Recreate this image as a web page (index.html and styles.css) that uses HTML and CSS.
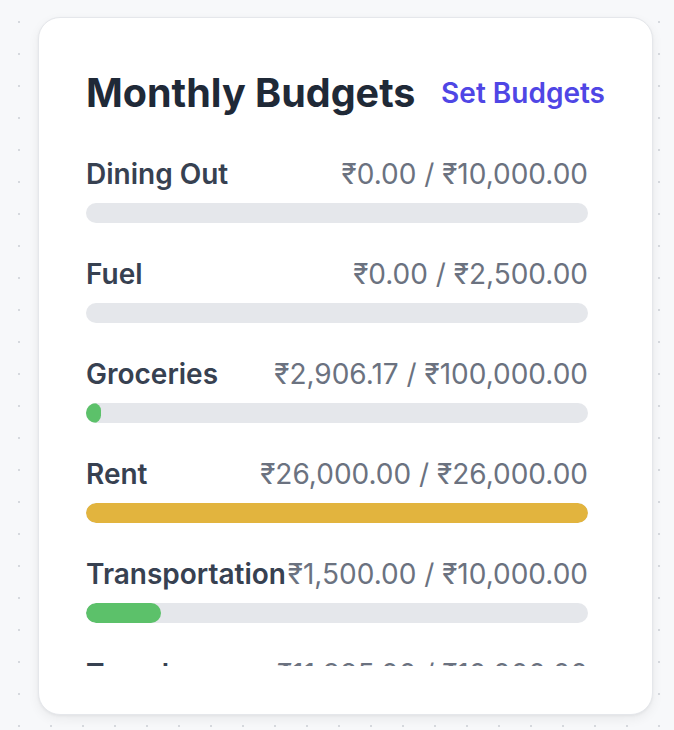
FILE: index.html
```html
<!DOCTYPE html>
<html lang="en">
<head>
    <meta charset="UTF-8">
    <meta name="viewport" content="width=device-width, initial-scale=1.0">
    <title>Monthly Budgets</title>
    <link rel="stylesheet" href="styles.css">
</head>
<body>
    <!-- Carte des budgets -->
    <div class="card">
        <div class="card-header">
            <h2>Monthly Budgets</h2>
            <a href="#" class="set-link">Set Budgets</a>
        </div>

        <div class="budget-list">
            <div class="budget">
                <div class="budget-info">
                    <span class="budget-name">Dining Out</span>
                    <span class="budget-amount">₹0.00 / ₹10,000.00</span>
                </div>
                <div class="bar"><div class="fill" style="width: 0%;"></div></div>
            </div>

            <div class="budget">
                <div class="budget-info">
                    <span class="budget-name">Fuel</span>
                    <span class="budget-amount">₹0.00 / ₹2,500.00</span>
                </div>
                <div class="bar"><div class="fill" style="width: 0%;"></div></div>
            </div>

            <div class="budget">
                <div class="budget-info">
                    <span class="budget-name">Groceries</span>
                    <span class="budget-amount">₹2,906.17 / ₹100,000.00</span>
                </div>
                <div class="bar"><div class="fill green" style="width: 2.9%;"></div></div>
            </div>

            <div class="budget">
                <div class="budget-info">
                    <span class="budget-name">Rent</span>
                    <span class="budget-amount">₹26,000.00 / ₹26,000.00</span>
                </div>
                <div class="bar"><div class="fill yellow" style="width: 100%;"></div></div>
            </div>

            <div class="budget">
                <div class="budget-info">
                    <span class="budget-name">Transportation</span>
                    <span class="budget-amount">₹1,500.00 / ₹10,000.00</span>
                </div>
                <div class="bar"><div class="fill green" style="width: 15%;"></div></div>
            </div>

            <div class="budget">
                <div class="budget-info">
                    <span class="budget-name">Travel</span>
                    <span class="budget-amount">₹11,985.00 / ₹10,000.00</span>
                </div>
                <div class="bar"><div class="fill red" style="width: 100%;"></div></div>
            </div>
        </div>
    </div>
</body>
</html>
```

FILE: styles.css
```css
/* Fond clair avec grille de points */
body {
    font-family: 'Inter', 'Noto Sans', sans-serif;
    margin: 0;
    padding: 17px 0 0 38px;
    min-height: 100vh;
    box-sizing: border-box;
    background-color: #f7f8fa;
    background-image: radial-gradient(circle, #d6d9de 1px, transparent 1.3px);
    background-size: 32px 32px;
    background-position: 3px 6px;
}

/* Carte principale */
.card {
    width: 615px;
    box-sizing: border-box;
    padding: 51px 47px 48px 47px;
    background-color: #ffffff;
    border: 1px solid #e5e7eb;
    border-radius: 22px;
    box-shadow: 0 4px 12px rgba(0, 0, 0, 0.06), 0 1px 3px rgba(0, 0, 0, 0.05);
}

.card-header {
    display: flex;
    justify-content: space-between;
    align-items: center;
    margin-bottom: 39px;
}

.card-header h2 {
    margin: 0;
    font-size: 39.5px;
    line-height: 48px;
    font-weight: 700;
    color: #1f2937;
}

.set-link {
    color: #4f46e5;
    font-size: 28px;
    font-weight: 600;
    text-decoration: none;
}

.budget-list {
    height: 510px;
    overflow: hidden;
    padding-right: 17px;
}

.budget {
    margin-bottom: 33px;
}

.budget-info {
    display: flex;
    justify-content: space-between;
    font-size: 28px;
    line-height: 32px;
    padding-top: 2px;
    margin-bottom: 13px;
}

.budget-name {
    font-weight: 600;
    color: #374151;
}

.budget-amount {
    color: #6b7280;
}

/* Barres de progression */
.bar {
    height: 20px;
    background-color: #e5e7eb;
    border-radius: 10px;
    overflow: hidden;
}

.fill {
    height: 100%;
    border-radius: 10px;
}

.green {
    background-color: #5cc16a;
}

.yellow {
    background-color: #e2b43e;
}

.red {
    background-color: #e5534b;
}
```
